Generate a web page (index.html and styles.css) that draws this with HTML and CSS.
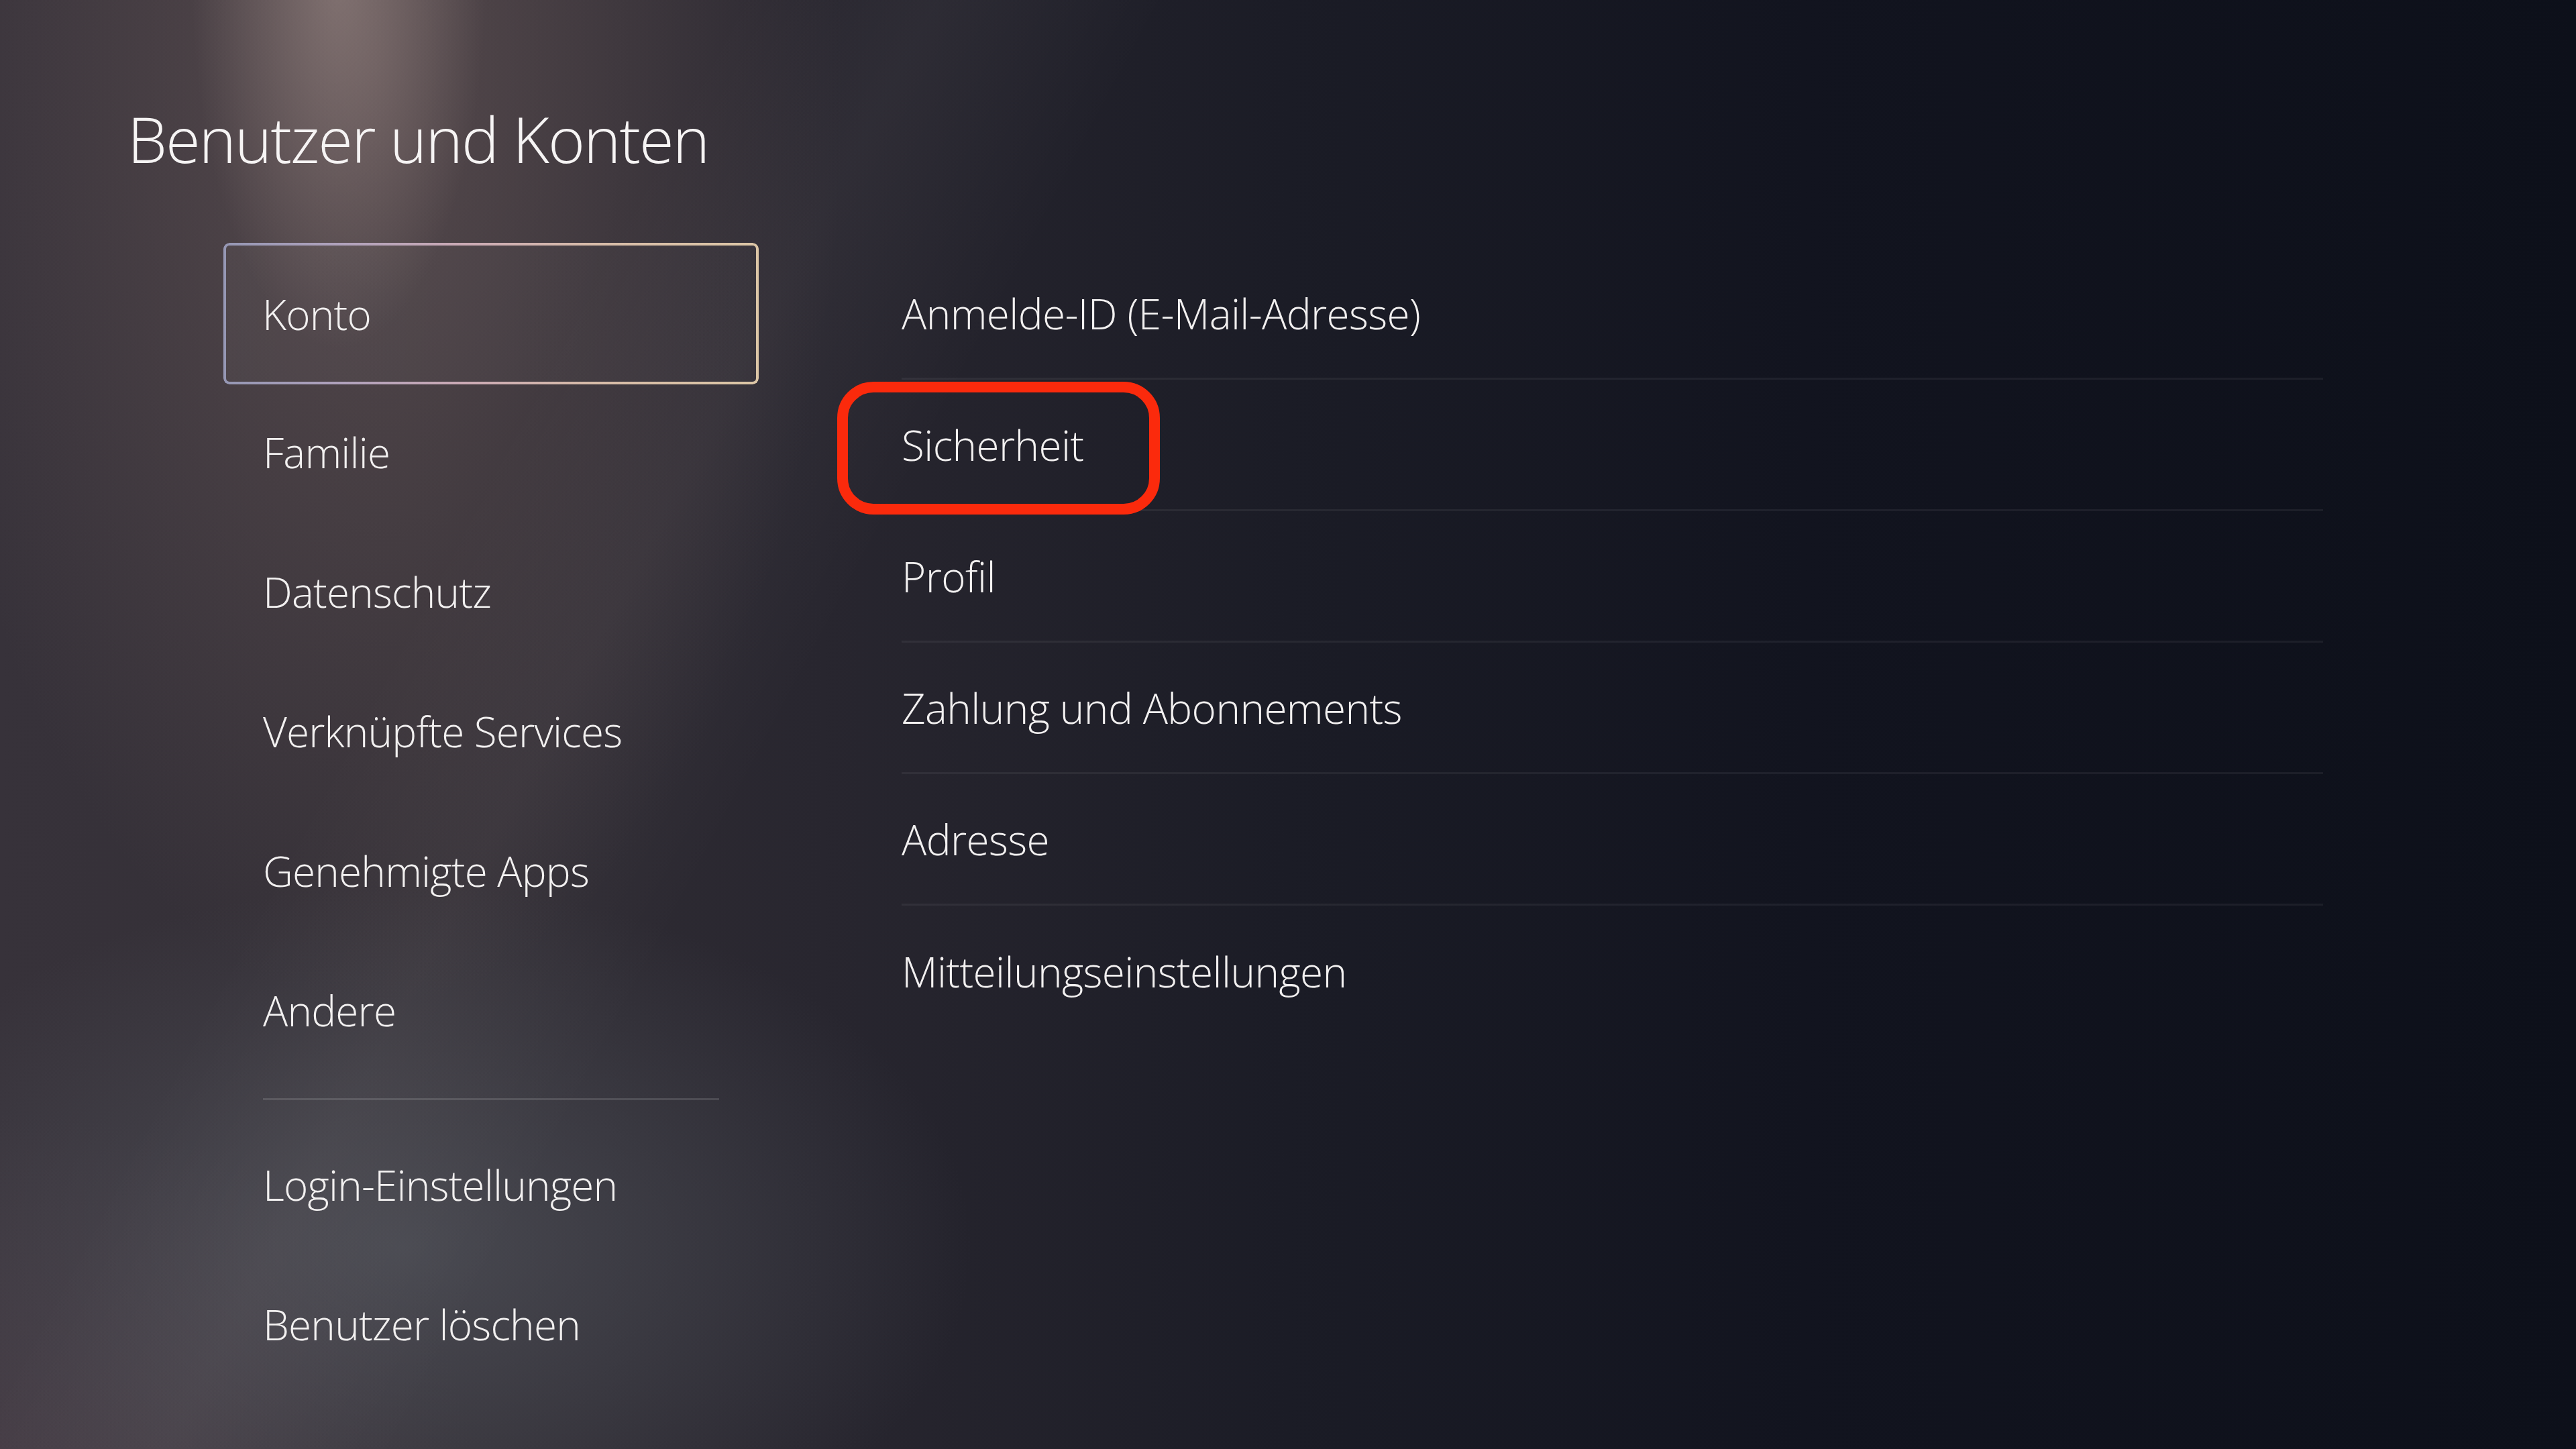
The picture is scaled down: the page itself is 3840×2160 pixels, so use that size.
FILE: index.html
```html
<!DOCTYPE html>
<html lang="de">
<head>
<meta charset="utf-8">
<title>Benutzer und Konten</title>
<link rel="stylesheet" href="styles.css">
</head>
<body>
<div class="screen">
  <h1 class="title">Benutzer und Konten</h1>
  <div class="main">
    <nav class="side">
      <div class="side-item selected">Konto</div>
      <div class="side-item">Familie</div>
      <div class="side-item">Datenschutz</div>
      <div class="side-item">Verknüpfte Services</div>
      <div class="side-item">Genehmigte Apps</div>
      <div class="side-item">Andere</div>
      <div class="side-sep"></div>
      <div class="side-item">Login-Einstellungen</div>
      <div class="side-item">Benutzer löschen</div>
    </nav>
    <div class="list">
      <div class="row">Anmelde-ID (E-Mail-Adresse)</div>
      <div class="row marked">Sicherheit<span class="mark"></span></div>
      <div class="row">Profil</div>
      <div class="row">Zahlung und Abonnements</div>
      <div class="row">Adresse</div>
      <div class="row last">Mitteilungseinstellungen</div>
    </div>
  </div>
</div>
</body>
</html>
```
FILE: styles.css
```css
html, body {
  margin: 0;
  padding: 0;
  width: 3840px;
  height: 2160px;
  overflow: hidden;
  background: #0e111b;
}

.screen {
  width: 3840px;
  height: 2160px;
  box-sizing: border-box;
  font-family: "Open Sans", "Noto Sans", sans-serif;
  font-weight: 300;
  color: #f2f0f0;
  background:
    radial-gradient(ellipse 220px 560px at 505px -40px, rgba(175, 155, 150, 0.5), rgba(175, 155, 150, 0) 100%),
    radial-gradient(ellipse 700px 1400px at 560px 100px, rgba(130, 108, 106, 0.44), rgba(130, 108, 106, 0) 100%),
    linear-gradient(118deg, rgba(255, 240, 235, 0) 22%, rgba(255, 240, 235, 0.04) 28%, rgba(255, 240, 235, 0) 35%),
    radial-gradient(ellipse 850px 540px at 600px 1860px, rgba(95, 100, 108, 0.5), rgba(95, 100, 108, 0) 100%),
    radial-gradient(ellipse 700px 500px at 0px 2160px, rgba(85, 70, 80, 0.45), rgba(85, 70, 80, 0) 100%),
    linear-gradient(90deg, #37323a 0%, #332f36 16%, #28262f 32%, #1b1c26 50%, #12141f 70%, #0d101a 100%);
  padding-top: 160px;
}

.title {
  margin: 0 0 108px 0;
  padding-left: 190px;
  font-size: 94px;
  line-height: 94px;
  font-weight: 300;
  letter-spacing: -2px;
  color: #f6f4f4;
}

.main {
  display: flex;
  align-items: flex-start;
  padding-left: 333px;
  gap: 213px;
}

.side {
  width: 798px;
  display: flex;
  flex-direction: column;
}

.side-item {
  height: 208px;
  display: flex;
  align-items: center;
  padding-left: 59px;
  font-size: 62px;
  line-height: 62px;
  letter-spacing: -0.8px;
  position: relative;
}

.side-item.selected {
  height: 211px;
  margin-bottom: -3px;
  padding-left: 58px;
  background: linear-gradient(100deg, rgba(255, 255, 255, 0.03), rgba(255, 255, 255, 0.01));
  border-radius: 9px;
}

.side-item.selected::before {
  content: "";
  position: absolute;
  inset: 0;
  border-radius: 9px;
  padding: 4px;
  background: linear-gradient(90deg, #9597b4 0%, #b0a2bc 22%, #cbaab5 45%, #d7bca8 70%, #dcc6a6 100%);
  -webkit-mask: linear-gradient(#000 0 0) content-box, linear-gradient(#000 0 0);
  -webkit-mask-composite: xor;
  mask: linear-gradient(#000 0 0) content-box exclude, linear-gradient(#000 0 0);
}

.side-sep {
  height: 3px;
  margin: 27px 59px 22px 59px;
  background: rgba(255, 255, 255, 0.13);
}

.list {
  width: 2119px;
  margin-top: 8px;
  display: flex;
  flex-direction: column;
}

.row {
  height: 196px;
  box-sizing: border-box;
  border-bottom: 3px solid rgba(255, 255, 255, 0.06);
  display: flex;
  align-items: center;
  font-size: 62px;
  line-height: 62px;
  letter-spacing: -0.6px;
  position: relative;
}

.row.last {
  border-bottom: none;
}

.mark {
  position: absolute;
  left: -96px;
  top: 3px;
  width: 481px;
  height: 198px;
  box-sizing: border-box;
  border: 16px solid #fb2a0c;
  border-radius: 54px;
}
```
